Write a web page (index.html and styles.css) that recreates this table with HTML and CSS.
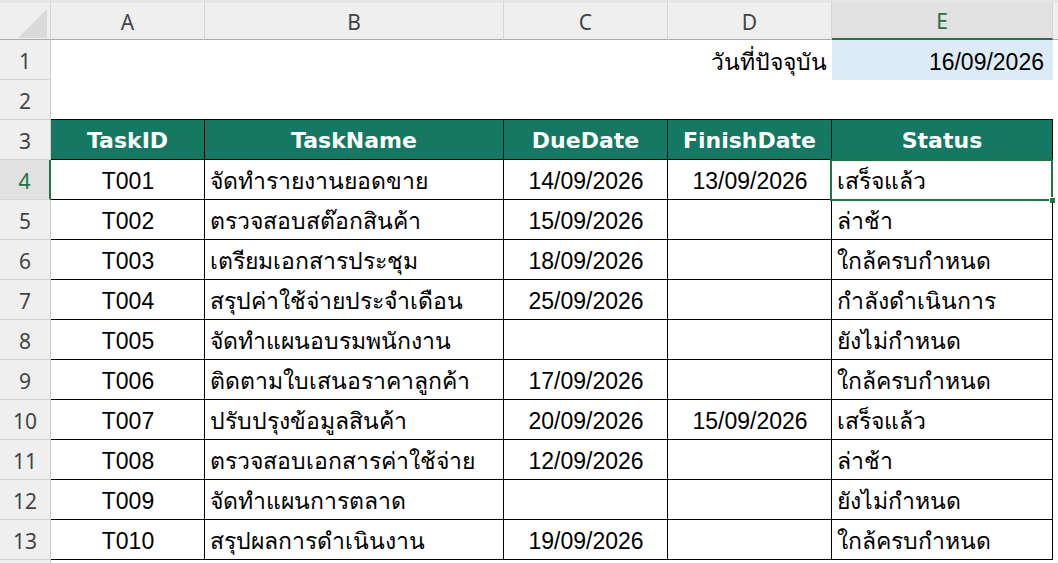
FILE: index.html
```html
<!DOCTYPE html>
<html lang="th">
<head>
<meta charset="utf-8">
<title>Tasks</title>
<link rel="stylesheet" href="styles.css">
</head>
<body>
<div class="sheet">
  <div class="corner"></div>
  <div class="ch">A</div><div class="ch">B</div><div class="ch">C</div><div class="ch">D</div><div class="ch sel">E</div><div class="ch f"></div>

  <div class="rh">1</div><div class="c"></div><div class="c"></div><div class="c"></div><div class="c right lbl">วันที่ปัจจุบัน</div><div class="c right today">16/09/2026</div><div class="c"></div>

  <div class="rh">2</div><div class="c top"></div><div class="c top"></div><div class="c top"></div><div class="c top"></div><div class="c top"></div><div class="c"></div>

  <div class="rh">3</div><div class="th">TaskID</div><div class="th">TaskName</div><div class="th">DueDate</div><div class="th">FinishDate</div><div class="th">Status</div><div class="c"></div>

  <div class="rh sel">4</div><div class="t mid">T001</div><div class="t">จัดทำรายงานยอดขาย</div><div class="t mid">14/09/2026</div><div class="t mid">13/09/2026</div><div class="t active">เสร็จแล้ว</div><div class="c"></div>

  <div class="rh">5</div><div class="t mid">T002</div><div class="t">ตรวจสอบสต๊อกสินค้า</div><div class="t mid">15/09/2026</div><div class="t mid"></div><div class="t">ล่าช้า</div><div class="c"></div>

  <div class="rh">6</div><div class="t mid">T003</div><div class="t">เตรียมเอกสารประชุม</div><div class="t mid">18/09/2026</div><div class="t mid"></div><div class="t">ใกล้ครบกำหนด</div><div class="c"></div>

  <div class="rh">7</div><div class="t mid">T004</div><div class="t">สรุปค่าใช้จ่ายประจำเดือน</div><div class="t mid">25/09/2026</div><div class="t mid"></div><div class="t">กำลังดำเนินการ</div><div class="c"></div>

  <div class="rh">8</div><div class="t mid">T005</div><div class="t">จัดทำแผนอบรมพนักงาน</div><div class="t mid"></div><div class="t mid"></div><div class="t">ยังไม่กำหนด</div><div class="c"></div>

  <div class="rh">9</div><div class="t mid">T006</div><div class="t">ติดตามใบเสนอราคาลูกค้า</div><div class="t mid">17/09/2026</div><div class="t mid"></div><div class="t">ใกล้ครบกำหนด</div><div class="c"></div>

  <div class="rh">10</div><div class="t mid">T007</div><div class="t">ปรับปรุงข้อมูลสินค้า</div><div class="t mid">20/09/2026</div><div class="t mid">15/09/2026</div><div class="t">เสร็จแล้ว</div><div class="c"></div>

  <div class="rh">11</div><div class="t mid">T008</div><div class="t">ตรวจสอบเอกสารค่าใช้จ่าย</div><div class="t mid">12/09/2026</div><div class="t mid"></div><div class="t">ล่าช้า</div><div class="c"></div>

  <div class="rh">12</div><div class="t mid">T009</div><div class="t">จัดทำแผนการตลาด</div><div class="t mid"></div><div class="t mid"></div><div class="t">ยังไม่กำหนด</div><div class="c"></div>

  <div class="rh">13</div><div class="t mid">T010</div><div class="t">สรุปผลการดำเนินงาน</div><div class="t mid">19/09/2026</div><div class="t mid"></div><div class="t">ใกล้ครบกำหนด</div><div class="c"></div>

  <div class="rh"></div><div class="c"></div><div class="c"></div><div class="c"></div><div class="c"></div><div class="c"></div><div class="c"></div>
</div>
</body>
</html>
```
FILE: styles.css
```css
html, body {
  margin: 0;
  padding: 0;
  background: #ffffff;
  overflow: hidden;
}
.sheet {
  display: grid;
  grid-template-columns: 51px 154px 299px 164px 164px 221px 1fr;
  grid-template-rows: 40px repeat(14, 40px);
  width: 1058px;
  height: 563px;
  overflow: hidden;
  font-family: "Liberation Sans", "DejaVu Sans", sans-serif;
  font-size: 23px;
  color: #000;
}
.sheet > div {
  box-sizing: border-box;
  min-width: 0;
  white-space: nowrap;
  overflow: visible;
}
.corner {
  position: relative;
  background: #efefef;
  border-top: 3px solid #e6e6e6;
  border-right: 1px solid #d4d4d4;
  border-bottom: 1px solid #ababab;
}
.corner::after {
  content: "";
  position: absolute;
  left: 18px;
  top: 6px;
  width: 29px;
  height: 29px;
  background: #dadada;
  clip-path: polygon(100% 0, 100% 100%, 0 100%);
}
.ch {
  display: flex;
  align-items: center;
  justify-content: center;
  background: #efefef;
  border-top: 3px solid #e6e6e6;
  border-right: 1px solid #d4d4d4;
  border-bottom: 1px solid #ababab;
  font-family: "Noto Sans", "Open Sans", sans-serif;
  font-size: 21px;
  color: #444444;
  padding-top: 1px;
}
.ch.sel {
  background: #e1e1e1;
  color: #217346;
  border-bottom: 2px solid #217346;
}
.ch.f {
  border-right: none;
}
.rh {
  display: flex;
  align-items: center;
  justify-content: center;
  background: #efefef;
  border-right: 1px solid #cfcfcf;
  border-bottom: 1px solid #d4d4d4;
  font-family: "Noto Sans", "Open Sans", sans-serif;
  font-size: 21px;
  color: #444444;
  padding-top: 2px;
}
.rh.sel {
  background: #e1e1e1;
  color: #217346;
  border-right: 2px solid #217346;
}
.c {
  background: #ffffff;
}
.c.top {
  border-bottom: 1px solid #000;
}
.c.right {
  display: flex;
  align-items: flex-end;
  justify-content: flex-end;
  line-height: 23px;
  padding-bottom: 6px;
}
.lbl {
  padding-right: 5px;
}
.today {
  background: #ddebf7 !important;
  padding-right: 9px;
}
.th {
  display: flex;
  align-items: center;
  justify-content: center;
  background: #147862;
  color: #ffffff;
  font-family: "DejaVu Sans", sans-serif;
  font-weight: bold;
  font-size: 22px;
  border-right: 1px solid #000;
  border-bottom: 1px solid #000;
  padding-top: 1px;
}
.t {
  display: flex;
  align-items: flex-end;
  justify-content: flex-start;
  line-height: 23px;
  padding: 0 4px 6px 5px;
  border-right: 1px solid #000;
  border-bottom: 1px solid #000;
  background: #ffffff;
}
.t.mid {
  justify-content: center;
}
.t.active {
  position: relative;
}
.t.active::before {
  content: "";
  position: absolute;
  left: -2px;
  top: -1px;
  right: -1px;
  bottom: -2px;
  border: 2px solid #217346;
}
.t.active::after {
  content: "";
  position: absolute;
  right: -3px;
  bottom: -4px;
  width: 5px;
  height: 5px;
  background: #217346;
  border: 1px solid #ffffff;
  border-right: none;
  border-bottom: none;
}
```
